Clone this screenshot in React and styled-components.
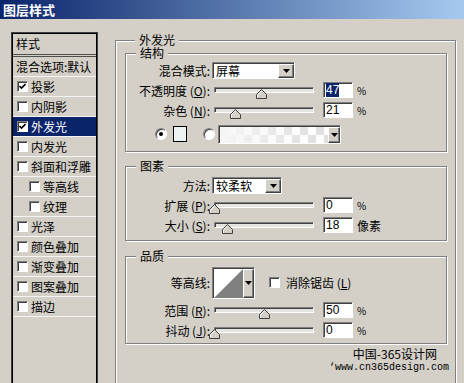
import React from 'react';
import styled, { createGlobalStyle } from 'styled-components';

const GlobalStyle = createGlobalStyle`
    html, body {
        margin: 0;
        padding: 0;
        background: #d4d0c8;
    }
    body {
        font-family: "Noto Sans CJK SC", "Noto Sans", sans-serif;
        font-size: 12px;
        color: #000;
    }
`;

const Window = styled.div`
    width: 464px;
    height: 383px;
    overflow: hidden;
    display: flex;
    flex-direction: column;
    background: #d4d0c8;
`;

const TitleBar = styled.div`
    height: 19px;
    flex: none;
    padding-left: 3px;
    line-height: 19px;
    font-size: 13px;
    font-weight: bold;
    color: #fff;
    background: linear-gradient(90deg, #0a246a 0%, #a6caf0 100%);
`;

const Body = styled.div`
    display: flex;
    align-items: flex-start;
    padding-left: 11px;
`;

/* ---------- left list ---------- */

const StyleList = styled.div`
    flex: none;
    width: 87px;
    height: 420px;
    margin-top: 13px;
    box-sizing: border-box;
    border: 1px solid #404040;
    box-shadow: inset 0 0 0 1px #000;
    padding: 1px;
`;

const ListHeader = styled.div`
    height: 20px;
    line-height: 20px;
    padding-left: 3px;
    border-bottom: 3px double #505050;
`;

const ListItem = styled.div`
    height: 19px;
    display: flex;
    align-items: center;
    gap: 3px;
    padding-left: ${p => p.$indent ? 16 : p.$plain ? 3 : 4}px;
    border-bottom: 1px solid #f4f4f4;
    background: ${p => p.$active ? '#0a246a' : 'transparent'};
    color: ${p => p.$active ? '#fff' : '#000'};
    white-space: nowrap;
`;

const CheckBox = styled.span`
    flex: none;
    width: 11px;
    height: 11px;
    box-sizing: border-box;
    border: 1px solid;
    border-color: #808080 #fff #fff #808080;
    box-shadow: inset 1px 1px #404040;
    background: #fff;
    display: flex;
    align-items: center;
    justify-content: center;
`;

const Check = ({ on }) => (
    <CheckBox>
        {on && (
            <svg width="7" height="7" viewBox="0 0 7 7">
                <path d="M0.5 3 L2.5 5 L6.5 1" stroke="#000" strokeWidth="1.6" fill="none" />
            </svg>
        )}
    </CheckBox>
);

/* ---------- right panel ---------- */

const Main = styled.div`
    margin-left: 17px;
    margin-top: 15px;
`;

const OuterGroup = styled.fieldset`
    width: 341px;
    height: 400px;
    box-sizing: border-box;
    margin: 0;
    padding: 0 8px 0 9px;
    min-width: 0;
    border: 1px solid #808080;
    box-shadow: inset 1px 1px #fff, 1px 1px #fff;
`;

const Group = styled.fieldset`
    margin: ${p => p.$mt || 0}px 0 0;
    padding: 0;
    min-width: 0;
    border: 1px solid #808080;
    box-shadow: inset 1px 1px #fff, 1px 1px #fff;
`;

const Legend = styled.legend`
    margin-left: 10px;
    padding: 0 4px;
    line-height: 12px;
    background: #d4d0c8;
`;

const GroupBody = styled.div`
    padding: ${p => p.$pt || 0}px 0 ${p => p.$pb || 0}px;
`;

const Row = styled.div`
    display: flex;
    align-items: center;
    height: ${p => p.$h || 20}px;
    margin-top: ${p => p.$mt || 0}px;
`;

const Label = styled.span`
    flex: none;
    width: 86px;
    box-sizing: border-box;
    padding-right: 2px;
    text-align: right;
    white-space: nowrap;
`;

const Mnemonic = styled.span`
    text-decoration: underline;
`;

const Select = styled.div`
    flex: none;
    display: flex;
    width: ${p => p.$w}px;
    height: 17px;
    box-sizing: border-box;
    border: 1px solid;
    border-color: #808080 #fff #fff #808080;
    box-shadow: inset 1px 1px #404040;
    background: #fff;
    padding: 1px 0 0 1px;
`;

const SelectText = styled.span`
    flex: 1;
    padding-left: 2px;
    line-height: 14px;
`;

const DropButton = styled.span`
    flex: none;
    width: ${p => p.$w || 16}px;
    box-sizing: border-box;
    border: 1px solid;
    border-color: #fff #404040 #404040 #fff;
    box-shadow: inset -1px -1px #808080;
    background: #d4d0c8;
    display: flex;
    align-items: center;
    justify-content: center;
`;

const Arrow = () => (
    <svg width="7" height="4" viewBox="0 0 7 4">
        <path d="M0 0 H7 L3.5 4 Z" fill="#000" />
    </svg>
);

const SliderBox = styled.div`
    position: relative;
    flex: none;
    width: 104px;
    height: 20px;
`;

const Track = styled.div`
    margin: 7px 2px 0;
    height: 6px;
    box-sizing: border-box;
    border: 1px solid;
    border-color: #808080 #fff #fff #808080;
    box-shadow: inset 1px 1px #404040;
    background: #e6e4de;
`;

const Thumb = styled.svg`
    position: absolute;
    top: 9px;
    left: ${p => p.$pos - 3}px;
`;

const NumberBox = styled.div`
    flex: none;
    width: 30px;
    height: 16px;
    margin-left: 7px;
    box-sizing: border-box;
    border: 1px solid;
    border-color: #808080 #fff #fff #808080;
    box-shadow: inset 1px 1px #404040;
    background: #fff;
    padding: 1px 0 0 2px;
    font-family: "Liberation Sans", sans-serif;
    font-size: 12px;
    line-height: 13px;
`;

const Selected = styled.span`
    background: #0a246a;
    color: #fff;
`;

const Unit = styled.span`
    margin-left: 4px;
    font-size: ${p => p.$small ? 10 : 12}px;
    white-space: nowrap;
`;

const Slider = ({ pos }) => (
    <SliderBox>
        <Track />
        <Thumb $pos={pos} width="11" height="10" viewBox="0 0 11 10">
            <path d="M5.5 0.5 L10.5 5.5 V9.5 H0.5 V5.5 Z" fill="#d4d0c8" stroke="#404040" />
            <path d="M1.5 8.5 V5.9 L5.5 1.9" stroke="#fff" fill="none" />
        </Thumb>
    </SliderBox>
);

const SliderRow = ({ label, pos, value, selected, unit }) => (
    <Row>
        <Label>{label}</Label>
        <Slider pos={pos} />
        <NumberBox>{selected ? <Selected>{value}</Selected> : value}</NumberBox>
        <Unit $small={unit === '%'}>{unit}</Unit>
    </Row>
);

const Radio = styled.span`
    position: relative;
    flex: none;
    width: 12px;
    height: 12px;
    margin-left: ${p => p.$ml || 0}px;
    box-sizing: border-box;
    border-radius: 50%;
    border: 1px solid;
    border-color: #808080 #fff #fff #808080;
    box-shadow: inset 1px 1px #404040;
    background: #fff;

    &::after {
        content: '';
        display: ${p => p.$checked ? 'block' : 'none'};
        position: absolute;
        left: 3px;
        top: 3px;
        width: 4px;
        height: 4px;
        border-radius: 50%;
        background: #000;
    }
`;

const ColorRow = styled.div`
    display: flex;
    align-items: center;
    height: 20px;
    margin: 4px 0 0 29px;
`;

const Swatch = styled.span`
    flex: none;
    width: 14px;
    height: 16px;
    margin-left: 6px;
    box-sizing: border-box;
    border: 1px solid #000;
    background: #edf2f2;
`;

const GradientPicker = styled.div`
    flex: none;
    display: flex;
    width: 123px;
    height: 19px;
    margin-left: 3px;
    box-sizing: border-box;
    border: 1px solid;
    border-color: #808080 #fff #fff #808080;
    box-shadow: inset 1px 1px #404040;
    padding: 1px 0 0 1px;
`;

const GradientField = styled.span`
    flex: 1;
    background-image:
        linear-gradient(90deg, #f6f6f6 0%, rgba(255, 255, 255, 0) 90%),
        conic-gradient(#fff 25%, #e0e0e0 0 50%, #fff 0 75%, #e0e0e0 0);
    background-size: 100% 100%, 16px 16px;
`;

const ContourPicker = styled.div`
    flex: none;
    display: flex;
    height: 32px;
    box-sizing: border-box;
    border: 1px solid;
    border-color: #808080 #fff #fff #808080;
    box-shadow: inset 1px 1px #404040;
    padding: 1px 0 0 1px;
`;

const ContourPreview = styled.svg`
    display: block;
    flex: none;
`;

const AntiAlias = styled.div`
    display: flex;
    align-items: center;
    margin-left: 14px;
`;

const CheckLabel = styled.span`
    margin-left: 6px;
    white-space: nowrap;
`;

const Watermark = styled.div`
    display: flex;
    flex-direction: column;
    align-items: flex-end;
    margin-top: 3px;
`;

const WatermarkCn = styled.span`
    margin-right: 10px;
    line-height: 14px;
    white-space: nowrap;
`;

const WatermarkUrl = styled.span`
    margin-right: -2px;
    font-family: "Liberation Mono", monospace;
    font-size: 10px;
    line-height: 13px;
    white-space: nowrap;
`;

const listItems = [
    { text: '投影', on: true },
    { text: '内阴影' },
    { text: '外发光', on: true, active: true },
    { text: '内发光' },
    { text: '斜面和浮雕' },
    { text: '等高线', indent: true },
    { text: '纹理', indent: true },
    { text: '光泽' },
    { text: '颜色叠加' },
    { text: '渐变叠加' },
    { text: '图案叠加' },
    { text: '描边' },
];

const App = () => {
    return (
        <>
            <GlobalStyle />
            <Window>
                <TitleBar>图层样式</TitleBar>
                <Body>
                    <StyleList>
                        <ListHeader>样式</ListHeader>
                        <ListItem $plain>混合选项:默认</ListItem>
                        {listItems.map(item => (
                            <ListItem key={item.text} $indent={item.indent} $active={item.active}>
                                <Check on={item.on} />
                                {item.text}
                            </ListItem>
                        ))}
                    </StyleList>

                    <Main>
                        <OuterGroup>
                            <Legend>外发光</Legend>

                            <Group $mt={1}>
                                <Legend>结构</Legend>
                                <GroupBody $pt={1} $pb={7}>
                                    <Row>
                                        <Label>混合模式:</Label>
                                        <Select $w={83}>
                                            <SelectText>屏幕</SelectText>
                                            <DropButton><Arrow /></DropButton>
                                        </Select>
                                    </Row>
                                    <SliderRow label={<>不透明度 (<Mnemonic>O</Mnemonic>):</>} pos={47} value="47" selected unit="%" />
                                    <SliderRow label={<>杂色 (<Mnemonic>N</Mnemonic>):</>} pos={21} value="21" unit="%" />
                                    <ColorRow>
                                        <Radio $checked />
                                        <Swatch />
                                        <Radio $ml={16} />
                                        <GradientPicker>
                                            <GradientField />
                                            <DropButton $w={12}><Arrow /></DropButton>
                                        </GradientPicker>
                                    </ColorRow>
                                </GroupBody>
                            </Group>

                            <Group $mt={8}>
                                <Legend>图素</Legend>
                                <GroupBody $pt={3} $pb={5}>
                                    <Row>
                                        <Label>方法:</Label>
                                        <Select $w={70}>
                                            <SelectText>较柔软</SelectText>
                                            <DropButton><Arrow /></DropButton>
                                        </Select>
                                    </Row>
                                    <SliderRow label={<>扩展 (<Mnemonic>P</Mnemonic>):</>} pos={0} value="0" unit="%" />
                                    <SliderRow label={<>大小 (<Mnemonic>S</Mnemonic>):</>} pos={13} value="18" unit="像素" />
                                </GroupBody>
                            </Group>

                            <Group $mt={9}>
                                <Legend>品质</Legend>
                                <GroupBody $pt={3} $pb={3}>
                                    <Row $h={35}>
                                        <Label>等高线:</Label>
                                        <ContourPicker>
                                            <ContourPreview width="29" height="29" viewBox="0 0 29 29">
                                                <rect width="29" height="29" fill="#fff" />
                                                <path d="M0 29 L29 0 V29 Z" fill="#808080" />
                                            </ContourPreview>
                                            <DropButton $w={11}><Arrow /></DropButton>
                                        </ContourPicker>
                                        <AntiAlias>
                                            <Check />
                                            <CheckLabel>消除锯齿 (<Mnemonic>L</Mnemonic>)</CheckLabel>
                                        </AntiAlias>
                                    </Row>
                                    <SliderRow label={<>范围 (<Mnemonic>R</Mnemonic>):</>} pos={50} value="50" unit="%" />
                                    <SliderRow label={<>抖动 (<Mnemonic>J</Mnemonic>):</>} pos={0} value="0" unit="%" />
                                </GroupBody>
                            </Group>

                            <Watermark>
                                <WatermarkCn>中国-365设计网</WatermarkCn>
                                <WatermarkUrl>‘www.cn365design.com</WatermarkUrl>
                            </Watermark>
                        </OuterGroup>
                    </Main>
                </Body>
            </Window>
        </>
    );
};

export default App;
